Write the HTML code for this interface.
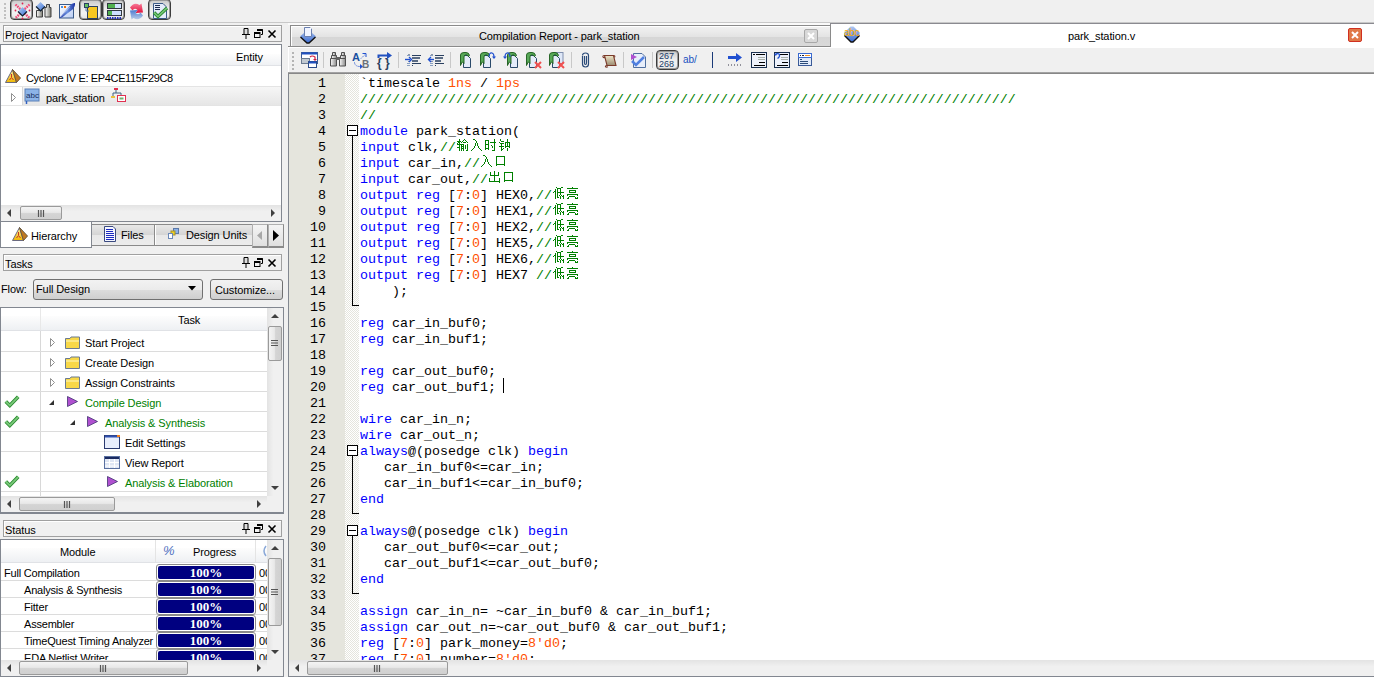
<!DOCTYPE html><html><head><meta charset="utf-8"><style>
*{box-sizing:border-box}
html,body{margin:0;padding:0}
body{width:1374px;height:677px;overflow:hidden;position:relative;background:#f0f0f0;font-family:"Liberation Sans",sans-serif;font-size:11px;color:#000}
.a{position:absolute}
.t{position:absolute;white-space:nowrap;font-size:11px;line-height:13px;letter-spacing:-0.1px}
.hdr{position:absolute;border:1px solid #a0a0a0;background:#f0f0f0;height:17px;box-shadow:inset 1px 1px 0 #fff}
.box{position:absolute;border:1px solid #828790;background:#fff}
.cl{position:absolute;left:360px;font-family:"Liberation Mono",monospace;font-size:13.333px;line-height:16px;white-space:pre;height:16px}
.ln{position:absolute;left:289px;width:37px;text-align:right;font-family:"Liberation Mono",monospace;font-size:13.333px;line-height:16px;height:16px}
.k{color:#0000ff}
.n{color:#ff5000}
.c{color:#008000}
svg{position:absolute;overflow:visible}
svg text{font-family:"Liberation Sans",sans-serif}
.g{color:#008000}
.row{position:absolute;height:1px;background:#e4e4e4}
.pb{position:absolute;left:156px;width:100px;height:17px;border:1px solid #8a8a8a;border-radius:3px;background:#fff;padding:1px}
.pb div{width:100%;height:100%;background:#000080;border-radius:2px;color:#fff;font-weight:bold;font-size:13px;line-height:13px;text-align:center;font-family:"Liberation Serif",serif;}
</style></head><body>
<div class="a" style="left:0;top:22px;width:1374px;height:1px;background:#c8c8c8"></div>
<div class="a" style="left:4px;top:3.0px;width:2px;height:2px;background:#c0c0c0"></div>
<div class="a" style="left:4px;top:6.5px;width:2px;height:2px;background:#c0c0c0"></div>
<div class="a" style="left:4px;top:10.0px;width:2px;height:2px;background:#c0c0c0"></div>
<div class="a" style="left:4px;top:13.5px;width:2px;height:2px;background:#c0c0c0"></div>
<div class="a" style="left:4px;top:17.0px;width:2px;height:2px;background:#c0c0c0"></div>
<div class="a" style="left:10px;top:-1px;width:23px;height:21px;border:1px solid #3c3c3c;border-radius:4px;background:linear-gradient(#c8c8c8,#ececec 45%,#f2f2f2 70%,#e4e4e4);box-shadow:inset 0 0 0 1px #9a9a9a"></div>
<svg style="left:13px;top:2px" width="19" height="18" viewBox="0 0 19 18" ><defs><linearGradient id="dm" x1="0" y1="0" x2="1" y2="1"><stop offset="0" stop-color="#b8d0f0"/><stop offset="1" stop-color="#3a70d8"/></linearGradient></defs><path d="M2.5 2.5L16.5 16M16.5 2.5L2.5 16" stroke="#f04a78" stroke-width="2.4" stroke-dasharray="1.6 0.9"/><circle cx="9.5" cy="1.5" r="0.9" fill="#e02050"/><circle cx="9.5" cy="16.5" r="0.9" fill="#e02050"/><circle cx="2.5" cy="8.5" r="0.9" fill="#e02050"/><circle cx="16.5" cy="8.5" r="0.9" fill="#e02050"/><path d="M9.5 5L14 9.5L9.5 14L5 9.5Z" fill="url(#dm)"/><path d="M5 9.5L9.5 14L14 9.5" stroke="#102030" stroke-width="1.2" fill="none"/></svg>
<svg style="left:35px;top:1px" width="17" height="17" viewBox="0 0 17 17" ><defs><linearGradient id="bg2" x1="0" x2="1"><stop offset="0" stop-color="#ffffff"/><stop offset="1" stop-color="#7a7a70"/></linearGradient></defs><path d="M11.5 3.5h3v3h1.5v9.5h-6v-9.5h1.5z" fill="url(#bg2)" stroke="#404040"/><path d="M1.5 9.5h6v6.5h-6z" fill="url(#bg2)" stroke="#404040"/><path d="M5.5 1L10 5.5L5.5 10L1 5.5Z" fill="url(#dm)"/><path d="M1 5.5L5.5 10L10 5.5" stroke="#102030" stroke-width="1.2" fill="none"/></svg>
<svg style="left:58px;top:1px" width="18" height="18" viewBox="0 0 18 18" ><defs><linearGradient id="pw" x1="0" y1="0" x2="1" y2="1"><stop offset="0" stop-color="#ffffff"/><stop offset="1" stop-color="#b8ccf4"/></linearGradient><linearGradient id="qu" x1="0" y1="0" x2="1" y2="0"><stop offset="0" stop-color="#1a30a0"/><stop offset="0.5" stop-color="#6a90e0"/><stop offset="1" stop-color="#1a30a0"/></linearGradient></defs><rect x="1.5" y="3.5" width="14" height="13.5" fill="url(#pw)" stroke="#3a5a88"/><rect x="3" y="5" width="2" height="2" fill="#4a90e0"/><rect x="6" y="5" width="2" height="2" fill="#f07000"/><path d="M1.5 17L11.5 5Q14.5 1.5 17 2Q17.5 5 14.5 8.5L4 16.5Z" fill="url(#qu)"/><path d="M3 15.5L12 6" stroke="#f0f4ff" stroke-width="0.8" stroke-dasharray="1 0.6"/></svg>
<div class="a" style="left:79px;top:-1px;width:23px;height:21px;border:1px solid #3c3c3c;border-radius:4px;background:linear-gradient(#c8c8c8,#ececec 45%,#f2f2f2 70%,#e4e4e4);box-shadow:inset 0 0 0 1px #9a9a9a"></div>
<svg style="left:84px;top:3px" width="15" height="16" viewBox="0 0 15 16" ><rect x="3.5" y="3.5" width="10" height="12" fill="#f8c820" stroke="#2a4060"/><rect x="0.5" y="0.5" width="4" height="4" fill="#60c060" stroke="#2a4060"/><path d="M2 5V8H5" stroke="#5a7aa8" fill="none"/></svg>
<div class="a" style="left:102px;top:-1px;width:23px;height:21px;border:1px solid #3c3c3c;border-radius:4px;background:linear-gradient(#c8c8c8,#ececec 45%,#f2f2f2 70%,#e4e4e4);box-shadow:inset 0 0 0 1px #9a9a9a"></div>
<svg style="left:107px;top:3px" width="15" height="16" viewBox="0 0 15 16" ><rect x="0.5" y="0.5" width="14" height="5" fill="#cfe0ff" stroke="#303840"/><rect x="1" y="1" width="7" height="4" fill="#50b050"/><rect x="0.5" y="7.5" width="14" height="5" fill="#cfe0ff" stroke="#303840"/><rect x="1" y="8" width="4" height="4" fill="#50b050"/><path d="M0 15H15" stroke="#2030c0" stroke-width="2" stroke-dasharray="1.5 1"/></svg>
<svg style="left:128px;top:2px" width="16" height="17" viewBox="0 0 16 17" ><defs><linearGradient id="rd" x1="0" y1="0" x2="0" y2="1"><stop offset="0" stop-color="#f87a98"/><stop offset="1" stop-color="#e0103a"/></linearGradient><linearGradient id="bl" x1="0" y1="0" x2="0" y2="1"><stop offset="0" stop-color="#b8cce8"/><stop offset="1" stop-color="#4a7ad0"/></linearGradient></defs><path d="M2 5.5Q6 -0.5 11.5 3L13.5 1.5L15 10.5L7.5 11L9.5 8Q6.5 5.5 4.5 8.5Z" fill="url(#rd)"/><path d="M2 5.5Q6 -0.5 11.5 3L13.5 1.5L15 10.5L7.5 11L9.5 8Q6.5 5.5 4.5 8.5Z" fill="url(#bl)" transform="rotate(180 8.5 9.5)"/></svg>
<div class="a" style="left:148px;top:-1px;width:23px;height:21px;border:1px solid #3c3c3c;border-radius:4px;background:linear-gradient(#c8c8c8,#ececec 45%,#f2f2f2 70%,#e4e4e4);box-shadow:inset 0 0 0 1px #9a9a9a"></div>
<svg style="left:152px;top:3px" width="16" height="16" viewBox="0 0 16 16" ><path d="M1.5 0.5H11L14.5 4V15.5H1.5Z" fill="#e4ecfa" stroke="#3a5a88"/><path d="M3 2.5H8M3 4.5H8M3 6.5H8" stroke="#1a2a50"/><path d="M2 9.5L6 13.5L15 5" stroke="#2a8a30" stroke-width="3.4" fill="none"/><path d="M2 9.5L6 13.5L15 5" stroke="#78c878" stroke-width="1.6" fill="none"/></svg>
<div class="hdr" style="left:3px;top:25px;width:279px"><span class="t" style="left:1px;top:3px">Project Navigator</span></div>
<svg style="left:242px;top:28px" width="8" height="11" viewBox="0 0 8 11" ><path d="M2 0.5H6V6.5H2Z" fill="#ddd" stroke="#000"/><path d="M0 6.5H8M4 7V11" stroke="#000"/></svg>
<svg style="left:254px;top:29px" width="9" height="9" viewBox="0 0 9 9" ><path d="M3 0.5H8.5V5.5H7" fill="none" stroke="#000"/><path d="M3 1H8.5" stroke="#000" stroke-width="2"/><rect x="0.5" y="3.5" width="5.5" height="5" fill="none" stroke="#000"/><path d="M0.5 4H6" stroke="#000" stroke-width="2"/></svg>
<svg style="left:268px;top:30px" width="8" height="8" viewBox="0 0 8 8" ><path d="M0.5 0.5L7.5 7.5M7.5 0.5L0.5 7.5" stroke="#000" stroke-width="1.6"/></svg>
<div class="box" style="left:0;top:44px;width:282px;height:178px"></div>
<div class="a" style="left:1px;top:54px;width:280px;height:12px;background:linear-gradient(#fdfdfd,#eef0f3)"></div>
<div class="a" style="left:1px;top:65px;width:280px;height:1px;background:#e0e2e6"></div>
<span class="t" style="left:236px;top:51px">Entity</span>
<svg style="left:5px;top:69px" width="17" height="15" viewBox="0 0 17 15" ><defs><linearGradient id="py" x1="0" y1="0" x2="0" y2="1"><stop offset="0" stop-color="#fff0a0"/><stop offset="1" stop-color="#f0b800"/></linearGradient></defs><path d="M7.5 0.5L0.5 13.5H11.5Z" fill="url(#py)" stroke="#6a6a80"/><path d="M7.5 0.5L15.5 9L11.5 13.5Z" fill="#c07820" stroke="#6a5a40"/><path d="M6.5 5V8M4.5 11L6.5 8.5L8.5 11" stroke="#c02020" fill="none" stroke-width="0.9"/></svg>
<span class="t" style="left:26px;top:72px;letter-spacing:-0.35px">Cyclone IV E: EP4CE115F29C8</span>
<div class="a" style="left:1px;top:86px;width:280px;height:1px;background:#e4e4e4"></div>
<div class="a" style="left:22px;top:87px;width:259px;height:18px;background:linear-gradient(#f6f6f6,#e6e6e6);border-left:1px solid #d8d8d8"></div>
<div class="a" style="left:1px;top:105px;width:280px;height:1px;background:#e4e4e4"></div>
<svg style="left:11px;top:93px" width="5" height="9" viewBox="0 0 5 9" ><path d="M0.5 0.5L4.5 4.5L0.5 8.5Z" fill="#fff" stroke="#909090"/></svg>
<svg style="left:25px;top:89px" width="16" height="16" viewBox="0 0 16 16" ><rect x="0" y="0" width="14" height="12" fill="#8cb4e8" stroke="#5a80b8"/><text x="1" y="9" font-size="8" fill="#1a3060" font-family="Liberation Sans">abc</text><path d="M1.5 12V15" stroke="#3060c0" stroke-width="1.5"/></svg>
<span class="t" style="left:46px;top:92px">park_station</span>
<svg style="left:111px;top:88px" width="16" height="14" viewBox="0 0 16 14" ><rect x="3" y="0" width="4" height="2" fill="#e03050"/><path d="M5 2V5M2 5H10M2 5V8M10 5V8" stroke="#406080" fill="none"/><rect x="0" y="8" width="4" height="2" fill="#e8c040"/><rect x="6.5" y="7.5" width="8" height="6" fill="#fff" stroke="#e03050"/><rect x="8.5" y="9.5" width="4" height="2" fill="#70b070"/></svg>
<div class="a" style="left:1px;top:205px;width:280px;height:16px;background:linear-gradient(#e3e3e3,#f0f0f0 40%,#f0f0f0)"></div>
<svg style="left:7px;top:209px" width="4" height="8" viewBox="0 0 4 8" ><path d="M4 0V8L0 4Z" fill="#404040"/></svg>
<svg style="left:271px;top:209px" width="4" height="8" viewBox="0 0 4 8" ><path d="M0 0V8L4 4Z" fill="#404040"/></svg>
<div class="a" style="left:20px;top:206px;width:42px;height:14px;border:1px solid #9a9a9a;border-radius:2px;background:linear-gradient(#f4f4f4,#e8e8e8 45%,#d4d4d4 55%,#d0d0d0)"></div>
<svg style="left:37px;top:210px" width="8" height="7" viewBox="0 0 8 7" ><path d="M1.5 0V7M4 0V7M6.5 0V7" stroke="#555" stroke-width="1.2"/></svg>
<div class="a" style="left:1px;top:221px;width:280px;height:1px;background:#828790"></div>
<div class="a" style="left:92px;top:224px;width:160px;height:22px;background:linear-gradient(#e8e8e8,#d4d4d4 50%,#e8e8e8 51%,#ececec);border-top:1px solid #8a8a8a;border-bottom:1px solid #8a8a8a"></div>
<div class="a" style="left:154px;top:225px;width:1px;height:20px;background:#8a8a8a"></div>
<div class="a" style="left:155px;top:225px;width:1px;height:20px;background:#fff"></div>
<div class="a" style="left:0;top:222px;width:92px;height:26px;background:#fff;border-left:1px solid #828790;border-right:1px solid #828790;border-bottom:1px solid #828790"></div>
<svg style="left:12px;top:227px" width="17" height="15" viewBox="0 0 17 15" ><path d="M7.5 0.5L0.5 13.5H11.5Z" fill="url(#py)" stroke="#6a6a80"/><path d="M7.5 0.5L15.5 9L11.5 13.5Z" fill="#c07820" stroke="#6a5a40"/><path d="M6.5 5V8M4.5 11L6.5 8.5L8.5 11" stroke="#c02020" fill="none" stroke-width="0.9"/></svg>
<span class="t" style="left:31px;top:230px">Hierarchy</span>
<svg style="left:104px;top:226px" width="12" height="16" viewBox="0 0 12 16" ><path d="M0.5 0.5H9L11.5 3V15.5H0.5Z" fill="#f4f6ff" stroke="#3a4a80"/><path d="M2 3.5H9M2 5.5H9M2 7.5H10M2 9.5H10M2 11.5H10M2 13.5H10" stroke="#1a28c0"/></svg>
<span class="t" style="left:121px;top:229px">Files</span>
<svg style="left:168px;top:228px" width="11" height="11" viewBox="0 0 11 11" ><rect x="5.5" y="0.5" width="5" height="5" fill="#8ab0e8" stroke="#5a78a8"/><rect x="3" y="3" width="4" height="4" fill="#f0d020" stroke="#a09030"/><rect x="0.5" y="5.5" width="4" height="5" fill="#fff" stroke="#6a88b8"/></svg>
<span class="t" style="left:186px;top:229px">Design Units</span>
<div class="a" style="left:252px;top:224px;width:16px;height:24px;background:linear-gradient(#f4f4f4,#e0e0e0);border:1px solid #b0b0b0;border-right:1px solid #8a8a8a;border-bottom:2px solid #8a8a8a"></div>
<div class="a" style="left:268px;top:224px;width:16px;height:24px;background:linear-gradient(#f4f4f4,#e0e0e0);border:1px solid #b0b0b0;border-right:1px solid #8a8a8a;border-bottom:2px solid #8a8a8a"></div>
<svg style="left:257px;top:231px" width="5" height="9" viewBox="0 0 5 9" ><path d="M5 0V9L0 4.5Z" fill="#a8a8a8"/></svg>
<svg style="left:273px;top:230px" width="6" height="11" viewBox="0 0 6 11" ><path d="M0 0V11L6 5.5Z" fill="#000"/></svg>
<div class="hdr" style="left:3px;top:254px;width:279px"><span class="t" style="left:1px;top:3px">Tasks</span></div>
<svg style="left:242px;top:257px" width="8" height="11" viewBox="0 0 8 11" ><path d="M2 0.5H6V6.5H2Z" fill="#ddd" stroke="#000"/><path d="M0 6.5H8M4 7V11" stroke="#000"/></svg>
<svg style="left:254px;top:258px" width="9" height="9" viewBox="0 0 9 9" ><path d="M3 0.5H8.5V5.5H7" fill="none" stroke="#000"/><path d="M3 1H8.5" stroke="#000" stroke-width="2"/><rect x="0.5" y="3.5" width="5.5" height="5" fill="none" stroke="#000"/><path d="M0.5 4H6" stroke="#000" stroke-width="2"/></svg>
<svg style="left:268px;top:259px" width="8" height="8" viewBox="0 0 8 8" ><path d="M0.5 0.5L7.5 7.5M7.5 0.5L0.5 7.5" stroke="#000" stroke-width="1.6"/></svg>
<span class="t" style="left:1px;top:283px">Flow:</span>
<div class="a" style="left:33px;top:279px;width:170px;height:21px;border:1px solid #707070;border-radius:3px;background:linear-gradient(#f2f2f2,#ebebeb 50%,#dddddd 51%,#cfcfcf)"></div>
<span class="t" style="left:36px;top:283px">Full Design</span>
<svg style="left:188px;top:286px" width="8" height="5" viewBox="0 0 8 5" ><path d="M0 0H8L4 4.5Z" fill="#000"/></svg>
<div class="a" style="left:210px;top:279px;width:73px;height:21px;border:1px solid #707070;border-radius:3px;background:linear-gradient(#f2f2f2,#ebebeb 50%,#dddddd 51%,#cfcfcf)"></div>
<span class="t" style="left:215px;top:284px">Customize...</span>
<div class="box" style="left:0;top:307px;width:284px;height:207px"></div>
<div class="a" style="left:1px;top:316px;width:266px;height:14px;background:linear-gradient(#fdfdfd,#eef0f3)"></div>
<div class="a" style="left:1px;top:330px;width:266px;height:1px;background:#e0e2e6"></div>
<div class="a" style="left:40px;top:308px;width:1px;height:22px;background:#e8e8e8"></div>
<span class="t" style="left:178px;top:314px">Task</span>
<div class="a" style="left:40px;top:331px;width:1px;height:165px;background:#d8d8d8"></div>
<div class="row" style="left:1px;top:351px;width:266px;background:#dcdcdc"></div>
<div class="row" style="left:1px;top:371px;width:266px;background:#dcdcdc"></div>
<div class="row" style="left:1px;top:391px;width:266px;background:#dcdcdc"></div>
<div class="row" style="left:1px;top:411px;width:266px;background:#dcdcdc"></div>
<div class="row" style="left:1px;top:431px;width:266px;background:#dcdcdc"></div>
<div class="row" style="left:1px;top:451px;width:266px;background:#dcdcdc"></div>
<div class="row" style="left:1px;top:471px;width:266px;background:#dcdcdc"></div>
<div class="row" style="left:1px;top:491px;width:266px;background:#dcdcdc"></div>
<svg style="left:50px;top:338px" width="5" height="9" viewBox="0 0 5 9" ><path d="M0.5 0.5L4.5 4.5L0.5 8.5Z" fill="#fff" stroke="#909090"/></svg>
<svg style="left:65px;top:336px" width="15" height="13" viewBox="0 0 15 13" ><path d="M0.5 2.5H5L6 1H14.5V12.5H0.5Z" fill="#f8d848" stroke="#6a7a90"/><path d="M1 5H14" stroke="#fff8c0"/></svg>
<span class="t" style="left:85px;top:337px;color:#000">Start Project</span>
<svg style="left:50px;top:358px" width="5" height="9" viewBox="0 0 5 9" ><path d="M0.5 0.5L4.5 4.5L0.5 8.5Z" fill="#fff" stroke="#909090"/></svg>
<svg style="left:65px;top:356px" width="15" height="13" viewBox="0 0 15 13" ><path d="M0.5 2.5H5L6 1H14.5V12.5H0.5Z" fill="#f8d848" stroke="#6a7a90"/><path d="M1 5H14" stroke="#fff8c0"/></svg>
<span class="t" style="left:85px;top:357px;color:#000">Create Design</span>
<svg style="left:50px;top:378px" width="5" height="9" viewBox="0 0 5 9" ><path d="M0.5 0.5L4.5 4.5L0.5 8.5Z" fill="#fff" stroke="#909090"/></svg>
<svg style="left:65px;top:376px" width="15" height="13" viewBox="0 0 15 13" ><path d="M0.5 2.5H5L6 1H14.5V12.5H0.5Z" fill="#f8d848" stroke="#6a7a90"/><path d="M1 5H14" stroke="#fff8c0"/></svg>
<span class="t" style="left:85px;top:377px;color:#000">Assign Constraints</span>
<svg style="left:49px;top:400px" width="5" height="5" viewBox="0 0 5 5" ><path d="M5 0V5H0Z" fill="#303030"/></svg>
<svg style="left:67px;top:396px" width="11" height="11" viewBox="0 0 11 11" ><path d="M0.5 0.5L10.5 5.5L0.5 10.5Z" fill="#b050d0" stroke="#403070" stroke-width="0.8"/></svg>
<svg style="left:4px;top:395px" width="16" height="13" viewBox="0 0 16 13" ><path d="M1.8 6.5L5.8 10.5L14.2 1.8" stroke="#2a8a30" stroke-width="3.6" fill="none"/><path d="M1.8 6.5L5.8 10.5L14.2 1.8" stroke="#78c878" stroke-width="1.8" fill="none"/></svg>
<span class="t" style="left:85px;top:397px;color:#008000">Compile Design</span>
<svg style="left:70px;top:420px" width="5" height="5" viewBox="0 0 5 5" ><path d="M5 0V5H0Z" fill="#303030"/></svg>
<svg style="left:87px;top:416px" width="11" height="11" viewBox="0 0 11 11" ><path d="M0.5 0.5L10.5 5.5L0.5 10.5Z" fill="#b050d0" stroke="#403070" stroke-width="0.8"/></svg>
<svg style="left:4px;top:415px" width="16" height="13" viewBox="0 0 16 13" ><path d="M1.8 6.5L5.8 10.5L14.2 1.8" stroke="#2a8a30" stroke-width="3.6" fill="none"/><path d="M1.8 6.5L5.8 10.5L14.2 1.8" stroke="#78c878" stroke-width="1.8" fill="none"/></svg>
<span class="t" style="left:105px;top:417px;color:#008000">Analysis &amp; Synthesis</span>
<svg style="left:104px;top:435px" width="16" height="14" viewBox="0 0 16 14" ><rect x="0.5" y="0.5" width="15" height="13" fill="#e8eefc" stroke="#2a3a70"/><path d="M1 1.5H15" stroke="#3050b0" stroke-width="2"/><rect x="13" y="0" width="3" height="2" fill="#f08020"/></svg>
<span class="t" style="left:125px;top:437px;color:#000">Edit Settings</span>
<svg style="left:104px;top:456px" width="16" height="13" viewBox="0 0 16 13" ><rect x="0" y="0" width="16" height="13" fill="#dfe6f4"/><rect x="0" y="0" width="16" height="3" fill="#1a2a60"/><path d="M0 6.5H16M0 10H16M5.5 3V13M10.5 3V13" stroke="#fff"/><rect x="0.5" y="0.5" width="15" height="12" fill="none" stroke="#5a70a0"/></svg>
<span class="t" style="left:125px;top:457px;color:#000">View Report</span>
<svg style="left:107px;top:476px" width="11" height="11" viewBox="0 0 11 11" ><path d="M0.5 0.5L10.5 5.5L0.5 10.5Z" fill="#b050d0" stroke="#403070" stroke-width="0.8"/></svg>
<svg style="left:4px;top:475px" width="16" height="13" viewBox="0 0 16 13" ><path d="M1.8 6.5L5.8 10.5L14.2 1.8" stroke="#2a8a30" stroke-width="3.6" fill="none"/><path d="M1.8 6.5L5.8 10.5L14.2 1.8" stroke="#78c878" stroke-width="1.8" fill="none"/></svg>
<span class="t" style="left:125px;top:477px;color:#008000">Analysis &amp; Elaboration</span>
<div class="a" style="left:267px;top:308px;width:16px;height:188px;background:linear-gradient(90deg,#e3e3e3,#f0f0f0 40%,#f0f0f0)"></div>
<svg style="left:271px;top:314px" width="8" height="4" viewBox="0 0 8 4" ><path d="M0 4H8L4 0Z" fill="#404040"/></svg>
<svg style="left:271px;top:486px" width="8" height="4" viewBox="0 0 8 4" ><path d="M0 0H8L4 4Z" fill="#404040"/></svg>
<div class="a" style="left:268px;top:326px;width:14px;height:35px;border:1px solid #9a9a9a;border-radius:2px;background:linear-gradient(90deg,#f4f4f4,#e8e8e8 45%,#d4d4d4 55%,#d0d0d0)"></div>
<svg style="left:271px;top:339px" width="7" height="8" viewBox="0 0 7 8" ><path d="M0 1.5H7M0 4H7M0 6.5H7" stroke="#555" stroke-width="1.2"/></svg>
<div class="a" style="left:1px;top:496px;width:266px;height:16px;background:linear-gradient(#e3e3e3,#f0f0f0 40%,#f0f0f0)"></div>
<svg style="left:7px;top:500px" width="4" height="8" viewBox="0 0 4 8" ><path d="M4 0V8L0 4Z" fill="#404040"/></svg>
<svg style="left:257px;top:500px" width="4" height="8" viewBox="0 0 4 8" ><path d="M0 0V8L4 4Z" fill="#404040"/></svg>
<div class="a" style="left:19px;top:497px;width:96px;height:14px;border:1px solid #9a9a9a;border-radius:2px;background:linear-gradient(#f4f4f4,#e8e8e8 45%,#d4d4d4 55%,#d0d0d0)"></div>
<svg style="left:63px;top:501px" width="8" height="7" viewBox="0 0 8 7" ><path d="M1.5 0V7M4 0V7M6.5 0V7" stroke="#555" stroke-width="1.2"/></svg>
<div class="a" style="left:267px;top:496px;width:16px;height:16px;background:#f0f0f0"></div>
<div class="a" style="left:1px;top:512px;width:282px;height:1px;background:#828790"></div>
<div class="hdr" style="left:3px;top:520px;width:279px"><span class="t" style="left:1px;top:3px">Status</span></div>
<svg style="left:242px;top:523px" width="8" height="11" viewBox="0 0 8 11" ><path d="M2 0.5H6V6.5H2Z" fill="#ddd" stroke="#000"/><path d="M0 6.5H8M4 7V11" stroke="#000"/></svg>
<svg style="left:254px;top:524px" width="9" height="9" viewBox="0 0 9 9" ><path d="M3 0.5H8.5V5.5H7" fill="none" stroke="#000"/><path d="M3 1H8.5" stroke="#000" stroke-width="2"/><rect x="0.5" y="3.5" width="5.5" height="5" fill="none" stroke="#000"/><path d="M0.5 4H6" stroke="#000" stroke-width="2"/></svg>
<svg style="left:268px;top:525px" width="8" height="8" viewBox="0 0 8 8" ><path d="M0.5 0.5L7.5 7.5M7.5 0.5L0.5 7.5" stroke="#000" stroke-width="1.6"/></svg>
<div class="box" style="left:0;top:539px;width:284px;height:138px"></div>
<div class="a" style="left:1px;top:548px;width:266px;height:14px;background:linear-gradient(#fdfdfd,#eef0f3)"></div>
<div class="a" style="left:1px;top:562px;width:266px;height:1px;background:#e0e2e6"></div>
<div class="a" style="left:155px;top:540px;width:1px;height:22px;background:#e4e4e4"></div>
<div class="a" style="left:255px;top:540px;width:1px;height:22px;background:#e4e4e4"></div>
<span class="t" style="left:60px;top:546px">Module</span>
<svg style="left:163px;top:545px" width="12" height="11" viewBox="0 0 12 11" ><text x="0" y="10" font-size="13" font-style="italic" fill="#5070c0" font-family="Liberation Sans">%</text></svg>
<span class="t" style="left:193px;top:546px">Progress</span>
<svg style="left:262px;top:546px" width="5" height="10" viewBox="0 0 5 10" ><path d="M4 0Q0 5 4 10" stroke="#8aa8d8" stroke-width="1.5" fill="none"/></svg>
<div class="a" style="left:1px;top:563px;width:266px;height:97px;overflow:hidden">
<div class="row" style="left:0;top:17px;width:266px;background:#dcdcdc"></div>
<span class="t" style="left:3px;top:4px;letter-spacing:-0.2px">Full Compilation</span>
<div class="pb" style="left:155px;top:1px"><div>100%</div></div>
<span class="t" style="left:258px;top:4px">00</span>
<div class="row" style="left:0;top:34px;width:266px;background:#dcdcdc"></div>
<span class="t" style="left:23px;top:21px;letter-spacing:-0.2px">Analysis &amp; Synthesis</span>
<div class="pb" style="left:155px;top:18px"><div>100%</div></div>
<span class="t" style="left:258px;top:21px">00</span>
<div class="row" style="left:0;top:51px;width:266px;background:#dcdcdc"></div>
<span class="t" style="left:23px;top:38px;letter-spacing:-0.2px">Fitter</span>
<div class="pb" style="left:155px;top:35px"><div>100%</div></div>
<span class="t" style="left:258px;top:38px">00</span>
<div class="row" style="left:0;top:68px;width:266px;background:#dcdcdc"></div>
<span class="t" style="left:23px;top:55px;letter-spacing:-0.2px">Assembler</span>
<div class="pb" style="left:155px;top:52px"><div>100%</div></div>
<span class="t" style="left:258px;top:55px">00</span>
<div class="row" style="left:0;top:85px;width:266px;background:#dcdcdc"></div>
<span class="t" style="left:23px;top:72px;letter-spacing:-0.2px">TimeQuest Timing Analyzer</span>
<div class="pb" style="left:155px;top:69px"><div>100%</div></div>
<span class="t" style="left:258px;top:72px">00</span>
<div class="row" style="left:0;top:102px;width:266px;background:#dcdcdc"></div>
<span class="t" style="left:23px;top:89px;letter-spacing:-0.2px">EDA Netlist Writer</span>
<div class="pb" style="left:155px;top:86px"><div>100%</div></div>
<span class="t" style="left:258px;top:89px">00</span>
</div>
<div class="a" style="left:267px;top:540px;width:16px;height:120px;background:linear-gradient(90deg,#e3e3e3,#f0f0f0 40%,#f0f0f0)"></div>
<svg style="left:271px;top:546px" width="8" height="4" viewBox="0 0 8 4" ><path d="M0 4H8L4 0Z" fill="#404040"/></svg>
<svg style="left:271px;top:650px" width="8" height="4" viewBox="0 0 8 4" ><path d="M0 0H8L4 4Z" fill="#404040"/></svg>
<div class="a" style="left:268px;top:558px;width:14px;height:68px;border:1px solid #9a9a9a;border-radius:2px;background:linear-gradient(90deg,#f4f4f4,#e8e8e8 45%,#d4d4d4 55%,#d0d0d0)"></div>
<svg style="left:271px;top:588px" width="7" height="8" viewBox="0 0 7 8" ><path d="M0 1.5H7M0 4H7M0 6.5H7" stroke="#555" stroke-width="1.2"/></svg>
<div class="a" style="left:1px;top:660px;width:266px;height:16px;background:linear-gradient(#e3e3e3,#f0f0f0 40%,#f0f0f0)"></div>
<svg style="left:7px;top:664px" width="4" height="8" viewBox="0 0 4 8" ><path d="M4 0V8L0 4Z" fill="#404040"/></svg>
<svg style="left:257px;top:664px" width="4" height="8" viewBox="0 0 4 8" ><path d="M0 0V8L4 4Z" fill="#404040"/></svg>
<div class="a" style="left:19px;top:661px;width:169px;height:14px;border:1px solid #9a9a9a;border-radius:2px;background:linear-gradient(#f4f4f4,#e8e8e8 45%,#d4d4d4 55%,#d0d0d0)"></div>
<svg style="left:99px;top:665px" width="8" height="7" viewBox="0 0 8 7" ><path d="M1.5 0V7M4 0V7M6.5 0V7" stroke="#555" stroke-width="1.2"/></svg>
<div class="a" style="left:267px;top:660px;width:16px;height:16px;background:#f0f0f0"></div>
<div class="a" style="left:288px;top:23px;width:542px;height:2px;background:#fafafa"></div>
<div class="a" style="left:830px;top:23px;width:544px;height:1px;background:#8a8a90"></div>
<div class="a" style="left:830px;top:23px;width:1px;height:24px;background:#8a8a90"></div>
<div class="a" style="left:290px;top:25px;width:541px;height:22px;background:linear-gradient(#f2f2f2,#e4e4e4 50%,#d6d6d6 51%,#d9d9d9);border:1px solid #8a8a8a;border-bottom:none;box-shadow:inset 1px 1px 0 #fff"></div>
<span class="t" style="left:479px;top:30px">Compilation Report - park_station</span>
<svg style="left:300px;top:27px" width="17" height="17" viewBox="0 0 17 17" ><path d="M8 2.5L15.5 9V10L9 16H7L0.5 10V9Z" fill="url(#ab)"/><path d="M0.5 10L7 16H9L15.5 10" stroke="#101010" stroke-width="1.4" fill="none"/><path d="M4.5 0.5H10.5L11.5 1.5V9.5H4.5Z" fill="#f0f4ff" stroke="#6a80b0"/><rect x="10" y="0.5" width="1.5" height="1.5" fill="#fff"/></svg>
<div class="a" style="left:804px;top:29px;width:14px;height:14px;border:1px solid #a8a8a8;border-radius:2px;background:#d8d8d8"></div>
<svg style="left:807px;top:32px" width="8" height="8" viewBox="0 0 8 8" ><path d="M1 1L7 7M7 1L1 7" stroke="#fff" stroke-width="2"/></svg>
<div class="a" style="left:831px;top:24px;width:543px;height:24px;background:#fff"></div>
<span class="t" style="left:1068px;top:30px">park_station.v</span>
<svg style="left:844px;top:26px" width="17" height="17" viewBox="0 0 17 17" ><defs><linearGradient id="ab" x1="0" y1="0" x2="0" y2="1"><stop offset="0" stop-color="#b0c8f0"/><stop offset="1" stop-color="#3a6ad0"/></linearGradient></defs><path d="M6.5 0.5H9.5L15.5 6.5V9.5L9 16H7L0.5 9.5V6.5Z" fill="url(#ab)"/><path d="M0.5 9.5L7 16H9L15.5 9.5" stroke="#101010" stroke-width="1.4" fill="none"/><text x="0" y="10" font-size="10" fill="#ffb000" letter-spacing="-0.3">abc</text></svg>
<div class="a" style="left:1348px;top:28px;width:14px;height:14px;border:1px solid #d03020;border-radius:2px;background:#e07848"></div>
<svg style="left:1351px;top:31px" width="8" height="8" viewBox="0 0 8 8" ><path d="M1 1L7 7M7 1L1 7" stroke="#fff" stroke-width="2"/></svg>
<div class="a" style="left:288px;top:47px;width:1086px;height:26px;background:#f0f0f0;border-top:1px solid #fff;border-left:1px solid #fff"></div>
<div class="a" style="left:288px;top:46px;width:543px;height:1px;background:#8a8a8a"></div>
<div class="a" style="left:831px;top:46px;width:543px;height:2px;background:#fff"></div>
<div class="a" style="left:292px;top:52px;width:2px;height:2px;background:#b4b4b4"></div>
<div class="a" style="left:292px;top:56px;width:2px;height:2px;background:#b4b4b4"></div>
<div class="a" style="left:292px;top:60px;width:2px;height:2px;background:#b4b4b4"></div>
<div class="a" style="left:292px;top:64px;width:2px;height:2px;background:#b4b4b4"></div>
<div class="a" style="left:292px;top:68px;width:2px;height:2px;background:#b4b4b4"></div>
<div class="a" style="left:323px;top:52px;width:1px;height:16px;background:#c8c8c8"></div>
<div class="a" style="left:398px;top:52px;width:1px;height:16px;background:#c8c8c8"></div>
<div class="a" style="left:450px;top:52px;width:1px;height:16px;background:#c8c8c8"></div>
<div class="a" style="left:571px;top:52px;width:1px;height:16px;background:#c8c8c8"></div>
<div class="a" style="left:623px;top:52px;width:1px;height:16px;background:#c8c8c8"></div>
<div class="a" style="left:652px;top:52px;width:1px;height:16px;background:#c8c8c8"></div>
<svg style="left:301px;top:52px" width="17" height="16" viewBox="0 0 17 16" ><rect x="0.5" y="0.5" width="16" height="11" fill="#fff" stroke="#3a5a98"/><path d="M1 1.5H16" stroke="#2050c0" stroke-width="2"/><rect x="0.5" y="6.5" width="8" height="5" fill="#c0c8d0" stroke="#6a7a90"/><rect x="7.5" y="9.5" width="8" height="6" fill="#fff" stroke="#2a4a88"/><path d="M8 10.5H15" stroke="#2050c0" stroke-width="2"/><path d="M9 5Q11 3 14 5V8" stroke="#d02040" fill="none" stroke-width="1.2"/><path d="M12 7H16L14 9Z" fill="#d02040"/></svg>
<svg style="left:330px;top:52px" width="16" height="15" viewBox="0 0 16 15" ><defs><linearGradient id="bn" x1="0" x2="1"><stop offset="0" stop-color="#fafafa"/><stop offset="1" stop-color="#8a8a8a"/></linearGradient></defs><path d="M2.5 0.5h3v3h-3z" fill="url(#bn)" stroke="#505050"/><path d="M1.5 3.5h5v3h-5z" fill="url(#bn)" stroke="#505050"/><path d="M0.5 6.5h6v7.5h-6z" fill="url(#bn)" stroke="#505050"/><g transform="translate(9 0)"><path d="M2.5 0.5h3v3h-3z" fill="url(#bn)" stroke="#505050"/><path d="M1.5 3.5h5v3h-5z" fill="url(#bn)" stroke="#505050"/><path d="M0.5 6.5h6v7.5h-6z" fill="url(#bn)" stroke="#505050"/></g><rect x="6" y="5" width="4" height="3" fill="#606060"/></svg>
<svg style="left:352px;top:52px" width="18" height="16" viewBox="0 0 18 16" ><text x="0" y="9" font-size="11" font-weight="bold" fill="#1a50a0">A</text><text x="10" y="16" font-size="10" font-weight="bold" fill="#6a7078">B</text><path d="M2.5 10.5Q3 14.5 8 14.5" stroke="#2050d0" stroke-dasharray="1 1" fill="none"/><path d="M8 12L11 14.5L8 17Z" fill="#2050d0"/><path d="M9 6.5L12.5 3" stroke="#2050d0" stroke-dasharray="1 1"/><path d="M10.5 1.5H14V5" fill="none" stroke="#2050d0"/></svg>
<svg style="left:377px;top:52px" width="16" height="16" viewBox="0 0 16 16" ><text x="0" y="15" font-size="12" font-weight="bold" fill="#2a4060">{ }</text><path d="M1.5 6V3.5H11" stroke="#2050c0" stroke-width="2" fill="none"/><path d="M10 0L15 3.5L10 7Z" fill="#2050c0"/></svg>
<svg style="left:405px;top:53px" width="16" height="15" viewBox="0 0 16 15" ><path d="M4 1V15" stroke="#2a4060" stroke-dasharray="1 6"/><path d="M2 2.5H5M2 10.5H5M2 12.5H5" stroke="#8aa0c0"/><path d="M7 2.5H16M7 10.5H16M7 12.5H8" stroke="#2a4060"/><path d="M7 5H15M7 8H13" stroke="#2a4060" stroke-width="1.6"/><path d="M0 6.5H5" stroke="#2050d0" stroke-width="1.4"/><path d="M4 4L6.5 6.5L4 9" stroke="#2050d0" fill="none" stroke-width="1.4"/></svg>
<svg style="left:428px;top:53px" width="16" height="15" viewBox="0 0 16 15" ><path d="M4 1V15" stroke="#2a4060" stroke-dasharray="1 6"/><path d="M2 2.5H5M2 10.5H5M2 12.5H5" stroke="#8aa0c0"/><path d="M7 2.5H16M7 10.5H16M7 12.5H8" stroke="#2a4060"/><path d="M7 5H15M7 8H13" stroke="#2a4060" stroke-width="1.6"/><path d="M1 6.5H6" stroke="#2050d0" stroke-width="1.4"/><path d="M3 4L0.5 6.5L3 9" stroke="#2050d0" fill="none" stroke-width="1.4"/></svg>
<svg style="left:460px;top:52px" width="13" height="17" viewBox="0 0 13 17" ><path d="M3.5 3.5H7.5L10.5 6.5V15.5H3.5Z" fill="#e4ecfa" stroke="#2a4a6a"/><path d="M0.5 13.5V3Q0.5 0.5 4 0.5H6Q9 0.5 9.5 3.5L8.2 4.5Q7.5 2.5 5.5 2.8Q4 3.2 4 5V11.5L2.3 9.8Z" fill="#58a858" stroke="#1a5a1a" stroke-width="0.9"/></svg>
<svg style="left:480px;top:52px" width="17" height="17" viewBox="0 0 17 17" ><path d="M3.5 3.5H7.5L10.5 6.5V15.5H3.5Z" fill="#e4ecfa" stroke="#2a4a6a"/><path d="M0.5 13.5V3Q0.5 0.5 4 0.5H6Q9 0.5 9.5 3.5L8.2 4.5Q7.5 2.5 5.5 2.8Q4 3.2 4 5V11.5L2.3 9.8Z" fill="#58a858" stroke="#1a5a1a" stroke-width="0.9"/><path d="M9 5Q9 0.5 12 1Q14 1.5 14 5" stroke="#2050d0" fill="none" stroke-width="1.2"/><path d="M12 4.5H16L14 7Z" fill="#2050d0"/></svg>
<svg style="left:503px;top:52px" width="17" height="17" viewBox="0 0 17 17" ><g transform="translate(4 0)"><path d="M3.5 3.5H7.5L10.5 6.5V15.5H3.5Z" fill="#e4ecfa" stroke="#2a4a6a"/><path d="M0.5 13.5V3Q0.5 0.5 4 0.5H6Q9 0.5 9.5 3.5L8.2 4.5Q7.5 2.5 5.5 2.8Q4 3.2 4 5V11.5L2.3 9.8Z" fill="#58a858" stroke="#1a5a1a" stroke-width="0.9"/></g><path d="M7 5Q7 0.5 4 1Q2 1.5 2 5" stroke="#2050d0" fill="none" stroke-width="1.2"/><path d="M0 4.5H4L2 7Z" fill="#2050d0"/></svg>
<svg style="left:526px;top:52px" width="17" height="17" viewBox="0 0 17 17" ><path d="M3.5 3.5H7.5L10.5 6.5V15.5H3.5Z" fill="#e4ecfa" stroke="#2a4a6a"/><path d="M0.5 13.5V3Q0.5 0.5 4 0.5H6Q9 0.5 9.5 3.5L8.2 4.5Q7.5 2.5 5.5 2.8Q4 3.2 4 5V11.5L2.3 9.8Z" fill="#58a858" stroke="#1a5a1a" stroke-width="0.9"/><path d="M9 10L15 16M15 10L9 16" stroke="#f05050" stroke-width="2"/></svg>
<svg style="left:549px;top:52px" width="17" height="17" viewBox="0 0 17 17" ><rect x="6" y="0.5" width="8" height="11" fill="#dfe8f8" stroke="#8090b0"/><path d="M3.5 3.5H7.5L10.5 6.5V15.5H3.5Z" fill="#e4ecfa" stroke="#2a4a6a"/><path d="M0.5 13.5V3Q0.5 0.5 4 0.5H6Q9 0.5 9.5 3.5L8.2 4.5Q7.5 2.5 5.5 2.8Q4 3.2 4 5V11.5L2.3 9.8Z" fill="#58a858" stroke="#1a5a1a" stroke-width="0.9"/><path d="M9 10L15 16M15 10L9 16" stroke="#f05050" stroke-width="2"/></svg>
<svg style="left:581px;top:52px" width="9" height="16" viewBox="0 0 9 16" ><path d="M1.5 4V12Q1.5 15 4.5 15Q7.5 15 7.5 12V3.5Q7.5 1 4.5 1Q1.5 1 1.5 3.5M3.5 4V11Q3.5 12.5 4.5 12.5Q5.5 12.5 5.5 11V4" stroke="#2a4a78" fill="none" stroke-width="1.2"/></svg>
<svg style="left:602px;top:54px" width="15" height="14" viewBox="0 0 15 14" ><defs><linearGradient id="sc" x1="0" y1="0" x2="0" y2="1"><stop offset="0" stop-color="#efe6c8"/><stop offset="1" stop-color="#9a8a70"/></linearGradient></defs><path d="M2.5 1.5H11.5L14 11.5H5Z" fill="url(#sc)" stroke="#7a3a2a" stroke-width="1.1"/><path d="M2.5 1.5Q0.5 1.5 1 3Q1.5 4 3 3.5M5 11.5Q3 11.5 3.5 12.8Q4 13.5 6 12.8M11.5 1.5Q13.5 1.5 12.5 3.5" stroke="#7a3a2a" fill="none" stroke-width="1.1"/></svg>
<svg style="left:630px;top:52px" width="16" height="16" viewBox="0 0 16 16" ><path d="M3.5 1.5H12L15.5 5V15.5H3.5Z" fill="#e8eefa" stroke="#5070a0"/><path d="M1 2L7 5L1 8Z" fill="#b050d0"/><path d="M2 9L6 13L14 5" stroke="#5080e0" stroke-width="2.5" fill="none"/></svg>
<div class="a" style="left:656px;top:50px;width:23px;height:20px;border:1px solid #3c3c3c;border-radius:4px;background:linear-gradient(#c8c8c8,#ececec 45%,#f2f2f2 70%,#e4e4e4);box-shadow:inset 0 0 0 1px #9a9a9a"></div>
<span class="a" style="left:659px;top:52px;font-size:9px;line-height:8px;color:#1a3a68">267<br>268</span>
<span class="a" style="left:683px;top:55px;font-size:10px;line-height:10px;color:#2050c0">ab/</span>
<div class="a" style="left:712px;top:52px;width:1px;height:16px;background:#1a3a78"></div>
<svg style="left:728px;top:53px" width="15" height="13" viewBox="0 0 15 13" ><path d="M0 4.5H9" stroke="#2050d0" stroke-width="3"/><path d="M8 0L14 4.5L8 9Z" fill="#2050d0"/><path d="M0 12H14" stroke="#334" stroke-dasharray="1 2"/></svg>
<svg style="left:751px;top:52px" width="16" height="16" viewBox="0 0 16 16" ><rect x="0.5" y="0.5" width="15" height="15" fill="#eef2fb" stroke="#1a3050"/><path d="M5 2.5H14M8 10.5H14M3 13.5H14" stroke="#000"/><path d="M7 5.5H14M7 7.5H14" stroke="#a8b0a8"/><rect x="2" y="2" width="2" height="1" fill="#000"/></svg>
<svg style="left:774px;top:52px" width="16" height="16" viewBox="0 0 16 16" ><rect x="0.5" y="0.5" width="15" height="15" fill="#eef2fb" stroke="#1a3050"/><path d="M5 2.5H14M8 10.5H14M3 13.5H14" stroke="#000"/><path d="M7 5.5H14M7 7.5H14" stroke="#a8b0a8"/><path d="M1.5 3Q3.5 0.5 5.5 2.5Q6 5 3.5 6.5" stroke="#2050d0" fill="none" stroke-width="1.2"/><path d="M0 2L3 1L2 4Z" fill="#2050d0"/></svg>
<svg style="left:798px;top:53px" width="14" height="13" viewBox="0 0 14 13" ><rect x="0.5" y="0.5" width="13" height="12" fill="#e0eafa" stroke="#3a5a98"/><rect x="0.5" y="0.5" width="13" height="4" fill="#fff" stroke="#3a6ad0"/><path d="M2 2.5H3M4 2.5H6" stroke="#223"/><path d="M7 2.5H12" stroke="#f09020"/><path d="M2 6.5H4M2 8.5H10M2 10.5H10" stroke="#2a4a78"/></svg>
<div class="a" style="left:288px;top:72px;width:1086px;height:2px;background:linear-gradient(#b0b0b0,#7a7a7a)"></div>
<div class="a" style="left:288px;top:74px;width:1086px;height:603px;background:#fff;border-left:1px solid #828790"></div>
<div class="a" style="left:289px;top:74px;width:56px;height:586px;background:#e5e5dd"></div>
<div class="a" style="left:345px;top:74px;width:14px;height:586px;background:repeating-conic-gradient(#e5e5dd 0 25%,#fff 0 50%) 0 0/2px 2px"></div>
<div class="a" style="left:289px;top:74px;width:1085px;height:586px;overflow:hidden">
<div class="a" style="left:-289px;top:-74px;width:1374px;height:700px">
<div class="ln" style="top:76px">1</div>
<div class="cl" style="top:76px">`timescale <span class="n">1ns</span> / <span class="n">1ps</span></div>
<div class="ln" style="top:92px">2</div>
<div class="cl" style="top:92px"><span class="c">//////////////////////////////////////////////////////////////////////////////////</span></div>
<div class="ln" style="top:108px">3</div>
<div class="cl" style="top:108px"><span class="c">//</span></div>
<div class="ln" style="top:124px">4</div>
<div class="cl" style="top:124px"><span class="k">module</span> park_station(</div>
<div class="ln" style="top:140px">5</div>
<div class="cl" style="top:140px"><span class="k">input</span> clk,<span class="c">//</span></div>
<div class="ln" style="top:156px">6</div>
<div class="cl" style="top:156px"><span class="k">input</span> car_in,<span class="c">//</span></div>
<div class="ln" style="top:172px">7</div>
<div class="cl" style="top:172px"><span class="k">input</span> car_out,<span class="c">//</span></div>
<div class="ln" style="top:188px">8</div>
<div class="cl" style="top:188px"><span class="k">output</span> <span class="k">reg</span> [<span class="n">7</span>:<span class="n">0</span>] HEX0,<span class="c">//</span></div>
<div class="ln" style="top:204px">9</div>
<div class="cl" style="top:204px"><span class="k">output</span> <span class="k">reg</span> [<span class="n">7</span>:<span class="n">0</span>] HEX1,<span class="c">//</span></div>
<div class="ln" style="top:220px">10</div>
<div class="cl" style="top:220px"><span class="k">output</span> <span class="k">reg</span> [<span class="n">7</span>:<span class="n">0</span>] HEX2,<span class="c">//</span></div>
<div class="ln" style="top:236px">11</div>
<div class="cl" style="top:236px"><span class="k">output</span> <span class="k">reg</span> [<span class="n">7</span>:<span class="n">0</span>] HEX5,<span class="c">//</span></div>
<div class="ln" style="top:252px">12</div>
<div class="cl" style="top:252px"><span class="k">output</span> <span class="k">reg</span> [<span class="n">7</span>:<span class="n">0</span>] HEX6,<span class="c">//</span></div>
<div class="ln" style="top:268px">13</div>
<div class="cl" style="top:268px"><span class="k">output</span> <span class="k">reg</span> [<span class="n">7</span>:<span class="n">0</span>] HEX7 <span class="c">//</span></div>
<div class="ln" style="top:284px">14</div>
<div class="cl" style="top:284px">    );</div>
<div class="ln" style="top:300px">15</div>
<div class="cl" style="top:300px"></div>
<div class="ln" style="top:316px">16</div>
<div class="cl" style="top:316px"><span class="k">reg</span> car_in_buf0;</div>
<div class="ln" style="top:332px">17</div>
<div class="cl" style="top:332px"><span class="k">reg</span> car_in_buf1;</div>
<div class="ln" style="top:348px">18</div>
<div class="cl" style="top:348px"></div>
<div class="ln" style="top:364px">19</div>
<div class="cl" style="top:364px"><span class="k">reg</span> car_out_buf0;</div>
<div class="ln" style="top:380px">20</div>
<div class="cl" style="top:380px"><span class="k">reg</span> car_out_buf1; </div>
<div class="ln" style="top:396px">21</div>
<div class="cl" style="top:396px"></div>
<div class="ln" style="top:412px">22</div>
<div class="cl" style="top:412px"><span class="k">wire</span> car_in_n;</div>
<div class="ln" style="top:428px">23</div>
<div class="cl" style="top:428px"><span class="k">wire</span> car_out_n;</div>
<div class="ln" style="top:444px">24</div>
<div class="cl" style="top:444px"><span class="k">always</span>@(posedge clk) <span class="k">begin</span></div>
<div class="ln" style="top:460px">25</div>
<div class="cl" style="top:460px">   car_in_buf0&lt;=car_in;</div>
<div class="ln" style="top:476px">26</div>
<div class="cl" style="top:476px">   car_in_buf1&lt;=car_in_buf0;</div>
<div class="ln" style="top:492px">27</div>
<div class="cl" style="top:492px"><span class="k">end</span></div>
<div class="ln" style="top:508px">28</div>
<div class="cl" style="top:508px"></div>
<div class="ln" style="top:524px">29</div>
<div class="cl" style="top:524px"><span class="k">always</span>@(posedge clk) <span class="k">begin</span></div>
<div class="ln" style="top:540px">30</div>
<div class="cl" style="top:540px">   car_out_buf0&lt;=car_out;</div>
<div class="ln" style="top:556px">31</div>
<div class="cl" style="top:556px">   car_out_buf1&lt;=car_out_buf0;</div>
<div class="ln" style="top:572px">32</div>
<div class="cl" style="top:572px"><span class="k">end</span></div>
<div class="ln" style="top:588px">33</div>
<div class="cl" style="top:588px"></div>
<div class="ln" style="top:604px">34</div>
<div class="cl" style="top:604px"><span class="k">assign</span> car_in_n= ~car_in_buf0 &amp; car_in_buf1;</div>
<div class="ln" style="top:620px">35</div>
<div class="cl" style="top:620px"><span class="k">assign</span> car_out_n=~car_out_buf0 &amp; car_out_buf1;</div>
<div class="ln" style="top:636px">36</div>
<div class="cl" style="top:636px"><span class="k">reg</span> [<span class="n">7</span>:<span class="n">0</span>] park_money=<span class="n">8'd0</span>;</div>
<div class="ln" style="top:652px">37</div>
<div class="cl" style="top:652px"><span class="k">reg</span> [<span class="n">7</span>:<span class="n">0</span>] number=<span class="n">8'd0</span>;</div>
<svg width="0" height="0" style="position:absolute"><defs><path id="g36755" d="M2 0h1v1h-1zM7 0h1v1h-1zM2 1h1v1h-1zM6 1h1v1h-1zM8 1h1v1h-1zM0 2h4v1h-4zM5 2h1v1h-1zM9 2h1v1h-1zM1 3h2v1h-2zM4 3h1v1h-1zM6 3h3v1h-3zM10 3h1v1h-1zM0 4h1v1h-1zM2 4h1v1h-1zM0 5h7v1h-7zM10 5h1v1h-1zM2 6h1v1h-1zM4 6h1v1h-1zM6 6h1v1h-1zM8 6h1v1h-1zM10 6h1v1h-1zM2 7h1v1h-1zM4 7h3v1h-3zM8 7h1v1h-1zM10 7h1v1h-1zM0 8h3v1h-3zM4 8h1v1h-1zM6 8h1v1h-1zM8 8h1v1h-1zM10 8h1v1h-1zM2 9h1v1h-1zM4 9h3v1h-3zM8 9h1v1h-1zM10 9h1v1h-1zM2 10h1v1h-1zM4 10h1v1h-1zM6 10h1v1h-1zM10 10h1v1h-1zM2 11h1v1h-1zM4 11h1v1h-1zM6 11h1v1h-1zM9 11h2v1h-2z"/><path id="g20837" d="M2 0h2v1h-2zM4 1h1v1h-1zM5 2h1v1h-1zM5 3h1v1h-1zM4 4h1v1h-1zM6 4h1v1h-1zM4 5h1v1h-1zM6 5h1v1h-1zM4 6h1v1h-1zM6 6h1v1h-1zM3 7h1v1h-1zM7 7h1v1h-1zM3 8h1v1h-1zM7 8h1v1h-1zM2 9h1v1h-1zM8 9h1v1h-1zM1 10h1v1h-1zM9 10h1v1h-1zM0 11h1v1h-1zM10 11h1v1h-1z"/><path id="g26102" d="M9 0h1v1h-1zM0 1h4v1h-4zM9 1h1v1h-1zM0 2h1v1h-1zM3 2h1v1h-1zM9 2h1v1h-1zM0 3h1v1h-1zM3 3h1v1h-1zM5 3h6v1h-6zM0 4h1v1h-1zM3 4h1v1h-1zM9 4h1v1h-1zM0 5h4v1h-4zM9 5h1v1h-1zM0 6h1v1h-1zM3 6h1v1h-1zM6 6h1v1h-1zM9 6h1v1h-1zM0 7h1v1h-1zM3 7h1v1h-1zM7 7h1v1h-1zM9 7h1v1h-1zM0 8h1v1h-1zM3 8h1v1h-1zM7 8h1v1h-1zM9 8h1v1h-1zM0 9h4v1h-4zM9 9h1v1h-1zM0 10h1v1h-1zM3 10h1v1h-1zM9 10h1v1h-1zM7 11h3v1h-3z"/><path id="g38047" d="M1 0h1v1h-1zM8 0h1v1h-1zM1 1h1v1h-1zM8 1h1v1h-1zM2 2h3v1h-3zM8 2h1v1h-1zM0 3h1v1h-1zM6 3h5v1h-5zM1 4h4v1h-4zM6 4h1v1h-1zM8 4h1v1h-1zM10 4h1v1h-1zM2 5h1v1h-1zM6 5h1v1h-1zM8 5h1v1h-1zM10 5h1v1h-1zM2 6h1v1h-1zM6 6h1v1h-1zM8 6h1v1h-1zM10 6h1v1h-1zM0 7h5v1h-5zM6 7h5v1h-5zM2 8h1v1h-1zM6 8h1v1h-1zM10 8h1v1h-1zM2 9h1v1h-1zM4 9h1v1h-1zM8 9h1v1h-1zM2 10h2v1h-2zM8 10h1v1h-1zM2 11h1v1h-1zM8 11h1v1h-1z"/><path id="g20986" d="M5 0h1v1h-1zM1 1h1v1h-1zM5 1h1v1h-1zM9 1h1v1h-1zM1 2h1v1h-1zM5 2h1v1h-1zM9 2h1v1h-1zM1 3h1v1h-1zM5 3h1v1h-1zM9 3h1v1h-1zM1 4h9v1h-9zM5 5h1v1h-1zM5 6h1v1h-1zM0 7h1v1h-1zM5 7h1v1h-1zM10 7h1v1h-1zM0 8h1v1h-1zM5 8h1v1h-1zM10 8h1v1h-1zM0 9h1v1h-1zM5 9h1v1h-1zM10 9h1v1h-1zM0 10h11v1h-11zM10 11h1v1h-1z"/><path id="g21475" d="M1 1h9v1h-9zM1 2h1v1h-1zM9 2h1v1h-1zM1 3h1v1h-1zM9 3h1v1h-1zM1 4h1v1h-1zM9 4h1v1h-1zM1 5h1v1h-1zM9 5h1v1h-1zM1 6h1v1h-1zM9 6h1v1h-1zM1 7h1v1h-1zM9 7h1v1h-1zM1 8h1v1h-1zM9 8h1v1h-1zM1 9h9v1h-9zM1 10h1v1h-1zM9 10h1v1h-1z"/><path id="g20302" d="M3 0h1v1h-1zM8 0h2v1h-2zM4 1h4v1h-4zM2 2h1v1h-1zM4 2h1v1h-1zM7 2h1v1h-1zM2 3h1v1h-1zM4 3h1v1h-1zM7 3h1v1h-1zM1 4h2v1h-2zM4 4h1v1h-1zM7 4h1v1h-1zM0 5h1v1h-1zM2 5h1v1h-1zM4 5h7v1h-7zM2 6h1v1h-1zM4 6h1v1h-1zM7 6h1v1h-1zM2 7h1v1h-1zM4 7h1v1h-1zM7 7h1v1h-1zM2 8h1v1h-1zM4 8h1v1h-1zM6 8h1v1h-1zM8 8h1v1h-1zM10 8h1v1h-1zM2 9h1v1h-1zM4 9h1v1h-1zM7 9h1v1h-1zM9 9h2v1h-2zM2 10h1v1h-1zM4 10h2v1h-2zM7 10h1v1h-1zM10 10h1v1h-1zM2 11h1v1h-1zM7 11h1v1h-1zM10 11h1v1h-1z"/><path id="g20142" d="M5 0h1v1h-1zM0 1h11v1h-11zM2 3h7v1h-7zM2 4h1v1h-1zM8 4h1v1h-1zM2 5h7v1h-7zM0 7h11v1h-11zM0 8h1v1h-1zM10 8h1v1h-1zM2 9h6v1h-6zM1 10h1v1h-1zM8 10h1v1h-1zM10 10h1v1h-1zM0 11h2v1h-2zM8 11h3v1h-3z"/></defs></svg>
<svg style="left:457px;top:139px" width="12" height="12" viewBox="0 0 12 12" shape-rendering="crispEdges"><use href="#g36755" fill="#008000"/></svg>
<svg style="left:471px;top:139px" width="12" height="12" viewBox="0 0 12 12" shape-rendering="crispEdges"><use href="#g20837" fill="#008000"/></svg>
<svg style="left:485px;top:139px" width="12" height="12" viewBox="0 0 12 12" shape-rendering="crispEdges"><use href="#g26102" fill="#008000"/></svg>
<svg style="left:499px;top:139px" width="12" height="12" viewBox="0 0 12 12" shape-rendering="crispEdges"><use href="#g38047" fill="#008000"/></svg>
<svg style="left:481px;top:155px" width="12" height="12" viewBox="0 0 12 12" shape-rendering="crispEdges"><use href="#g20837" fill="#008000"/></svg>
<svg style="left:495px;top:155px" width="12" height="12" viewBox="0 0 12 12" shape-rendering="crispEdges"><use href="#g21475" fill="#008000"/></svg>
<svg style="left:489px;top:171px" width="12" height="12" viewBox="0 0 12 12" shape-rendering="crispEdges"><use href="#g20986" fill="#008000"/></svg>
<svg style="left:503px;top:171px" width="12" height="12" viewBox="0 0 12 12" shape-rendering="crispEdges"><use href="#g21475" fill="#008000"/></svg>
<svg style="left:553px;top:187px" width="12" height="12" viewBox="0 0 12 12" shape-rendering="crispEdges"><use href="#g20302" fill="#008000"/></svg>
<svg style="left:567px;top:187px" width="12" height="12" viewBox="0 0 12 12" shape-rendering="crispEdges"><use href="#g20142" fill="#008000"/></svg>
<svg style="left:553px;top:203px" width="12" height="12" viewBox="0 0 12 12" shape-rendering="crispEdges"><use href="#g20302" fill="#008000"/></svg>
<svg style="left:567px;top:203px" width="12" height="12" viewBox="0 0 12 12" shape-rendering="crispEdges"><use href="#g20142" fill="#008000"/></svg>
<svg style="left:553px;top:219px" width="12" height="12" viewBox="0 0 12 12" shape-rendering="crispEdges"><use href="#g20302" fill="#008000"/></svg>
<svg style="left:567px;top:219px" width="12" height="12" viewBox="0 0 12 12" shape-rendering="crispEdges"><use href="#g20142" fill="#008000"/></svg>
<svg style="left:553px;top:235px" width="12" height="12" viewBox="0 0 12 12" shape-rendering="crispEdges"><use href="#g20302" fill="#008000"/></svg>
<svg style="left:567px;top:235px" width="12" height="12" viewBox="0 0 12 12" shape-rendering="crispEdges"><use href="#g20142" fill="#008000"/></svg>
<svg style="left:553px;top:251px" width="12" height="12" viewBox="0 0 12 12" shape-rendering="crispEdges"><use href="#g20302" fill="#008000"/></svg>
<svg style="left:567px;top:251px" width="12" height="12" viewBox="0 0 12 12" shape-rendering="crispEdges"><use href="#g20142" fill="#008000"/></svg>
<svg style="left:553px;top:267px" width="12" height="12" viewBox="0 0 12 12" shape-rendering="crispEdges"><use href="#g20302" fill="#008000"/></svg>
<svg style="left:567px;top:267px" width="12" height="12" viewBox="0 0 12 12" shape-rendering="crispEdges"><use href="#g20142" fill="#008000"/></svg>
<div class="a" style="left:503px;top:378px;width:1px;height:15px;background:#000"></div>
</div></div>
<div class="a" style="left:347px;top:125px;width:11px;height:11px;border:1px solid #000;background:#fff"></div>
<div class="a" style="left:349px;top:130px;width:7px;height:1px;background:#000"></div>
<div class="a" style="left:352px;top:136px;width:1px;height:170px;background:#000"></div>
<div class="a" style="left:352px;top:305px;width:7px;height:1px;background:#000"></div>
<div class="a" style="left:347px;top:445px;width:11px;height:11px;border:1px solid #000;background:#fff"></div>
<div class="a" style="left:349px;top:450px;width:7px;height:1px;background:#000"></div>
<div class="a" style="left:352px;top:456px;width:1px;height:58px;background:#000"></div>
<div class="a" style="left:352px;top:513px;width:7px;height:1px;background:#000"></div>
<div class="a" style="left:347px;top:525px;width:11px;height:11px;border:1px solid #000;background:#fff"></div>
<div class="a" style="left:349px;top:530px;width:7px;height:1px;background:#000"></div>
<div class="a" style="left:352px;top:536px;width:1px;height:58px;background:#000"></div>
<div class="a" style="left:352px;top:593px;width:7px;height:1px;background:#000"></div>
<div class="a" style="left:289px;top:660px;width:1100px;height:16px;background:linear-gradient(#e3e3e3,#f0f0f0 40%,#f0f0f0)"></div>
<svg style="left:295px;top:664px" width="4" height="8" viewBox="0 0 4 8" ><path d="M4 0V8L0 4Z" fill="#404040"/></svg>
<svg style="left:1379px;top:664px" width="4" height="8" viewBox="0 0 4 8" ><path d="M0 0V8L4 4Z" fill="#404040"/></svg>
<div class="a" style="left:307px;top:661px;width:141px;height:14px;border:1px solid #9a9a9a;border-radius:2px;background:linear-gradient(#f4f4f4,#e8e8e8 45%,#d4d4d4 55%,#d0d0d0)"></div>
<svg style="left:373px;top:665px" width="8" height="7" viewBox="0 0 8 7" ><path d="M1.5 0V7M4 0V7M6.5 0V7" stroke="#555" stroke-width="1.2"/></svg>
<div class="a" style="left:288px;top:676px;width:1086px;height:1px;background:#828790"></div>
</body></html>
